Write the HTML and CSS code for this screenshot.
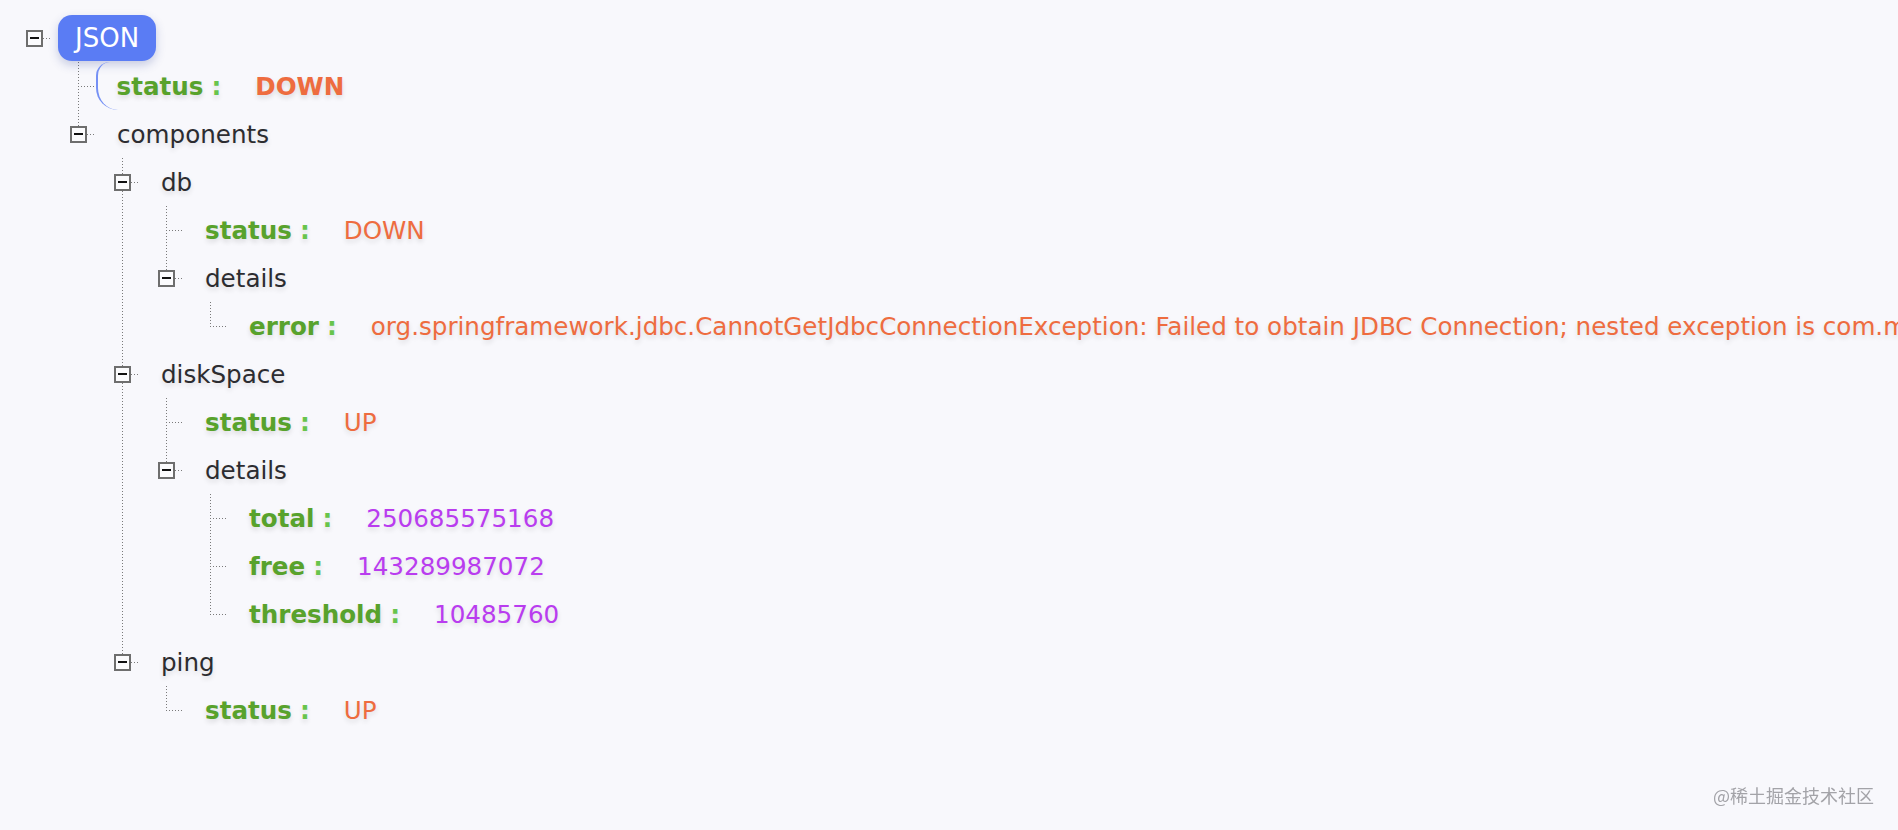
FILE: index.html
```html
<!DOCTYPE html>
<html lang="zh">
<head>
<meta charset="utf-8">
<title>JSON</title>
<link rel="stylesheet" href="styles.css">
</head>
<body>
<div class="tree">
  <div class="root">
    <div class="row">
      <span class="sw"><span class="box"></span></span>
      <span class="pill">JSON</span>
    </div>
    <ul>
      <li>
        <div class="row"><span class="sw"></span><span class="label sel"><span class="k">status</span><span class="c">:</span><span class="v str b">DOWN</span></span></div>
      </li>
      <li class="last">
        <div class="row"><span class="sw"><span class="box"></span></span><span class="label">components</span></div>
        <ul>
          <li>
            <div class="row"><span class="sw"><span class="box"></span></span><span class="label">db</span></div>
            <ul>
              <li>
                <div class="row"><span class="sw"></span><span class="label"><span class="k">status</span><span class="c">:</span><span class="v str">DOWN</span></span></div>
              </li>
              <li class="last">
                <div class="row"><span class="sw"><span class="box"></span></span><span class="label">details</span></div>
                <ul>
                  <li class="last">
                    <div class="row"><span class="sw"></span><span class="label"><span class="k">error</span><span class="c">:</span><span class="v str">org.springframework.jdbc.CannotGetJdbcConnectionException: Failed to obtain JDBC Connection; nested exception is com.mysql.jdbc.exceptions.jdbc4.CommunicationsException: Communications link failure</span></span></div>
                  </li>
                </ul>
              </li>
            </ul>
          </li>
          <li>
            <div class="row"><span class="sw"><span class="box"></span></span><span class="label">diskSpace</span></div>
            <ul>
              <li>
                <div class="row"><span class="sw"></span><span class="label"><span class="k">status</span><span class="c">:</span><span class="v str">UP</span></span></div>
              </li>
              <li class="last">
                <div class="row"><span class="sw"><span class="box"></span></span><span class="label">details</span></div>
                <ul>
                  <li>
                    <div class="row"><span class="sw"></span><span class="label"><span class="k">total</span><span class="c">:</span><span class="v num">250685575168</span></span></div>
                  </li>
                  <li>
                    <div class="row"><span class="sw"></span><span class="label"><span class="k">free</span><span class="c">:</span><span class="v num">143289987072</span></span></div>
                  </li>
                  <li class="last">
                    <div class="row"><span class="sw"></span><span class="label"><span class="k">threshold</span><span class="c">:</span><span class="v num">10485760</span></span></div>
                  </li>
                </ul>
              </li>
            </ul>
          </li>
          <li class="last">
            <div class="row"><span class="sw"><span class="box"></span></span><span class="label">ping</span></div>
            <ul>
              <li class="last">
                <div class="row"><span class="sw"></span><span class="label"><span class="k">status</span><span class="c">:</span><span class="v str">UP</span></span></div>
              </li>
            </ul>
          </li>
        </ul>
      </li>
    </ul>
  </div>
</div>
<div class="mark">@稀土掘金技术社区</div>
</body>
</html>
```

FILE: styles.css
```css
* { box-sizing: border-box; }
html, body { margin: 0; height: 100%; }
body {
  background: #f8f8fc;
  font-family: "DejaVu Sans", Verdana, sans-serif;
  font-size: 24.6px;
  color: #2c2c30;
  overflow: hidden;
  white-space: nowrap;
}
.tree {
  padding-left: 26px;
  text-shadow: 0 3px 5px rgba(0, 0, 0, 0.12);
}
.tree ul {
  list-style: none;
  margin: 0 0 0 44px;
  padding: 0;
}
.tree li {
  background-image: repeating-linear-gradient(180deg, #7a7a7a 0 1px, transparent 1px 3px);
  background-size: 1px 100%;
  background-position: 8px 0;
  background-repeat: no-repeat;
}
.tree li.last { background-image: none; }
.row {
  display: flex;
  align-items: center;
  height: 48px;
}
.root > .row { margin-top: 14px; }
.sw {
  flex: none;
  width: 26px;
  height: 48px;
  display: flex;
  align-items: center;
  background-image: repeating-linear-gradient(90deg, #7a7a7a 0 1px, transparent 1px 3px);
  background-size: 18px 1px;
  background-position: 8px 24px;
  background-repeat: no-repeat;
}
li.last > .row > .sw {
  background-image:
    repeating-linear-gradient(90deg, #7a7a7a 0 1px, transparent 1px 3px),
    repeating-linear-gradient(180deg, #7a7a7a 0 1px, transparent 1px 3px);
  background-size: 18px 1px, 1px 24px;
  background-position: 8px 24px, 8px 0;
  background-repeat: no-repeat, no-repeat;
}
.box {
  width: 17px;
  height: 17px;
  border: 2px solid #6e6e6e;
  background: #fbfbfd;
  display: flex;
  align-items: center;
  justify-content: center;
}
.box::before {
  content: "";
  width: 9px;
  height: 2px;
  background: #111;
}
.pill {
  margin-left: 6px;
  height: 46px;
  padding: 0 17px;
  display: flex;
  align-items: center;
  background: #5a7cf4;
  color: #fff;
  font-size: 26px;
  border-radius: 14px;
  box-shadow: 0 4px 10px rgba(50, 70, 150, 0.25);
  text-shadow: none;
}
.label {
  display: flex;
  align-items: center;
  height: 48px;
  padding-left: 21px;
}
.label.sel {
  border-left: 2.5px solid #7590f5;
  border-radius: 14px 0 0 22px;
  padding-left: 18.5px;
}
.k { font-weight: bold; color: #58a22c; }
.c { font-weight: bold; color: #67c44c; margin-left: 8px; margin-right: 34px; }
.v.str { color: #ee6c3f; }
.v.num { color: #b93cef; }
.b { font-weight: bold; }
.mark {
  position: fixed;
  right: 24px;
  bottom: 22px;
  font-family: "Noto Sans CJK SC", sans-serif;
  font-size: 18px;
  color: #a3a3a8;
}
```
